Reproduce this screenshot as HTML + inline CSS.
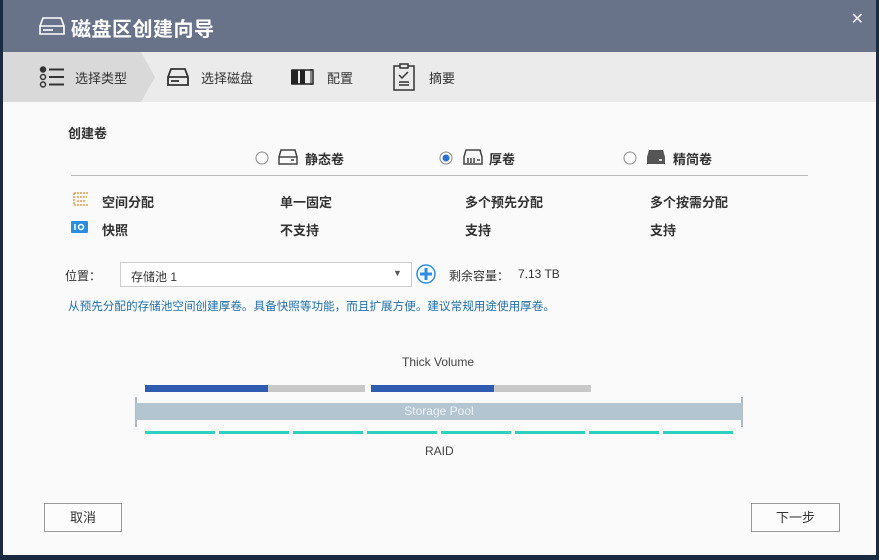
<!DOCTYPE html>
<html><head><meta charset="utf-8"><style>
*{box-sizing:border-box;margin:0;padding:0}
body{width:879px;height:560px;background:#1a2a40;font-family:"Liberation Sans","Noto Sans CJK SC",sans-serif;position:relative;overflow:hidden;color:#333}
.dlg{position:absolute;left:3px;top:0;width:873px;height:555px;background:#fafafa;overflow:hidden}
.hd{position:absolute;left:0;top:0;width:873px;height:52px;background:#687389}
.hd .t{position:absolute;left:68px;top:13px;font-size:20px;font-weight:bold;color:#fff;letter-spacing:0.5px}
.x{position:absolute;right:12px;top:9px;color:#eee;font-size:16px}
.steps{position:absolute;left:0;top:52px;width:873px;height:50px;background:#ebebeb}
.s{position:absolute;top:16px;font-size:13px;color:#333}
.a{position:absolute;font-size:13px}
.b{font-weight:bold}
.btn{position:absolute;top:503px;height:29px;border:1px solid #999;background:#fcfcfc;font-size:13px;text-align:center;line-height:27px}
</style></head><body>
<div class="dlg">
<div class="hd">
<svg style="position:absolute;left:36px;top:17px" width="26" height="18" viewBox="0 0 26 18" fill="none" stroke="#fff" stroke-width="1.6"><path d="M4 1h18l3 8v8H1V9z"/><path d="M1 9h24"/><path d="M4 13h10"/></svg>
<div class="t">磁盘区创建向导</div><div class="x">✕</div></div>
<div class="steps">
<svg style="position:absolute;left:0;top:0" width="155" height="50"><polygon points="0,0 138,0 152,25 138,50 0,50" fill="#d9d9d9"/></svg>
<svg style="position:absolute;left:36px;top:14px" width="26" height="22" fill="none" stroke="#333" stroke-width="1.4"><circle cx="4" cy="3.5" r="2.5" fill="#333"/><circle cx="4" cy="11" r="2.5"/><circle cx="4" cy="18.5" r="2.5"/><path d="M10 3.5h15M10 11h15M10 18.5h15" stroke-width="2"/></svg>
<div class="s" style="left:72px">选择类型</div>
<svg style="position:absolute;left:164px;top:16px" width="22" height="18" fill="none" stroke="#333" stroke-width="1.8"><path d="M4 1h14l3 8v8H1V9z"/><path d="M1 9h20"/><path d="M4 13h8"/></svg>
<div class="s" style="left:198px">选择磁盘</div>
<svg style="position:absolute;left:288px;top:17px" width="24" height="16"><rect x="0" y="1" width="7" height="14" fill="#222"/><rect x="9" y="1" width="5" height="14" fill="#222"/><rect x="1" y="1" width="21" height="14" fill="none" stroke="#222" stroke-width="1.5"/><path d="M20 0v16" stroke="#222"/></svg>
<div class="s" style="left:324px">配置</div>
<svg style="position:absolute;left:390px;top:11px" width="22" height="28" fill="none" stroke="#333" stroke-width="1.5"><rect x="1" y="3" width="20" height="24"/><rect x="7" y="1" width="8" height="4" fill="#ebebeb"/><path d="M6 12l3 3 6-6M6 19h10M6 22h10"/></svg>
<div class="s" style="left:426px">摘要</div>
</div>
<div class="a b" style="left:65px;top:123px">创建卷</div>
<svg style="position:absolute;left:252px;top:151px" width="14" height="14"><circle cx="7" cy="7" r="6" fill="#fff" stroke="#888"/></svg>
<svg style="position:absolute;left:275px;top:149px" width="20" height="16" fill="none" stroke="#444" stroke-width="1.5"><path d="M3 1h14l2 7v7H1V8z"/><path d="M1 8h18"/><path d="M13 11h3"/></svg>
<div class="a b" style="left:302px;top:149px">静态卷</div>
<svg style="position:absolute;left:436px;top:151px" width="14" height="14"><circle cx="7" cy="7" r="6" fill="#fff" stroke="#888"/><circle cx="7" cy="7" r="3.5" fill="#2a6fd6"/></svg>
<svg style="position:absolute;left:460px;top:149px" width="20" height="16" fill="none" stroke="#444" stroke-width="1.5"><path d="M3 1h14l2 7v7H1V8z"/><path d="M5 9v5M8 9v5M11 9v5"/><path d="M14 11h3"/></svg>
<div class="a b" style="left:486px;top:149px">厚卷</div>
<svg style="position:absolute;left:620px;top:151px" width="14" height="14"><circle cx="7" cy="7" r="6" fill="#fff" stroke="#888"/></svg>
<svg style="position:absolute;left:643px;top:149px" width="20" height="16"><path d="M3 1h14l2 7v7H1V8z" fill="#555"/><path d="M13 11h3" stroke="#fff" stroke-width="1.5"/></svg>
<div class="a b" style="left:670px;top:149px">精简卷</div>
<div style="position:absolute;left:68px;top:175px;width:737px;height:1px;background:#bbb"></div>
<svg style="position:absolute;left:70px;top:192px" width="16" height="14" fill="none" stroke="#e08a2a" stroke-width="1.2" stroke-dasharray="2 1"><path d="M1 1h14M1 1v12M4 5h10M4 9h8M1 13h14"/></svg>
<div class="a b" style="left:99px;top:192px">空间分配</div>
<div class="a b" style="left:277px;top:192px">单一固定</div>
<div class="a b" style="left:462px;top:192px">多个预先分配</div>
<div class="a b" style="left:647px;top:192px">多个按需分配</div>
<svg style="position:absolute;left:68px;top:221px" width="17" height="12"><rect width="17" height="12" rx="1" fill="#2b8ee0"/><path d="M4 3v6" stroke="#fff" stroke-width="1.5"/><circle cx="10" cy="6" r="2.5" fill="none" stroke="#fff" stroke-width="1.5"/></svg>
<div class="a b" style="left:99px;top:220px">快照</div>
<div class="a b" style="left:277px;top:220px">不支持</div>
<div class="a b" style="left:462px;top:220px">支持</div>
<div class="a b" style="left:647px;top:220px">支持</div>
<div class="a" style="left:62px;top:267px;font-size:12px">位置：</div>
<div style="position:absolute;left:117px;top:262px;width:292px;height:25px;border:1px solid #ccc;background:#fff"></div>
<div class="a" style="left:128px;top:268px;font-size:12px">存储池 1</div>
<div class="a" style="left:390px;top:268px;font-size:9px;color:#555">▼</div>
<svg style="position:absolute;left:413px;top:264px" width="20" height="20"><circle cx="10" cy="10" r="9" fill="#fff" stroke="#2b8ee0" stroke-width="1.5"/><path d="M10 4v12M4 10h12" stroke="#2b8ee0" stroke-width="3"/></svg>
<div class="a" style="left:446px;top:267px;font-size:12px">剩余容量：</div>
<div class="a" style="left:515px;top:267px;font-size:12px">7.13 TB</div>
<div class="a" style="left:65px;top:298px;font-size:11.6px;color:#1f6fa8;white-space:nowrap">从预先分配的存储池空间创建厚卷。具备快照等功能，而且扩展方便。建议常规用途使用厚卷。</div>
<div class="a" style="left:399px;top:355px;font-size:12px;color:#444">Thick Volume</div>
<div style="position:absolute;left:142px;top:385px;width:220px;height:7px;background:#c8c8c8"></div>
<div style="position:absolute;left:142px;top:385px;width:123px;height:7px;background:#2f5bb0"></div>
<div style="position:absolute;left:368px;top:385px;width:220px;height:7px;background:#c8c8c8"></div>
<div style="position:absolute;left:368px;top:385px;width:123px;height:7px;background:#2f5bb0"></div>
<div style="position:absolute;left:132px;top:397px;width:2px;height:30px;background:#b0bcc6"></div>
<div style="position:absolute;left:738px;top:397px;width:2px;height:30px;background:#b0bcc6"></div>
<div style="position:absolute;left:133px;top:403px;width:606px;height:17px;background:#b2c5d0;color:#eef3f6;font-size:12px;text-align:center;line-height:17px">Storage Pool</div>
<svg style="position:absolute;left:140px;top:431px" width="600" height="4"><g fill="#2ed1bd">
<rect x="2" width="70" height="3"/><rect x="76" width="70" height="3"/><rect x="150" width="70" height="3"/><rect x="224" width="70" height="3"/><rect x="298" width="70" height="3"/><rect x="372" width="70" height="3"/><rect x="446" width="70" height="3"/><rect x="520" width="70" height="3"/></g></svg>
<div class="a" style="left:422px;top:444px;font-size:12px;color:#444">RAID</div>
<div class="btn" style="left:41px;width:78px">取消</div>
<div class="btn" style="left:748px;width:89px">下一步</div>
</div>
</body></html>
